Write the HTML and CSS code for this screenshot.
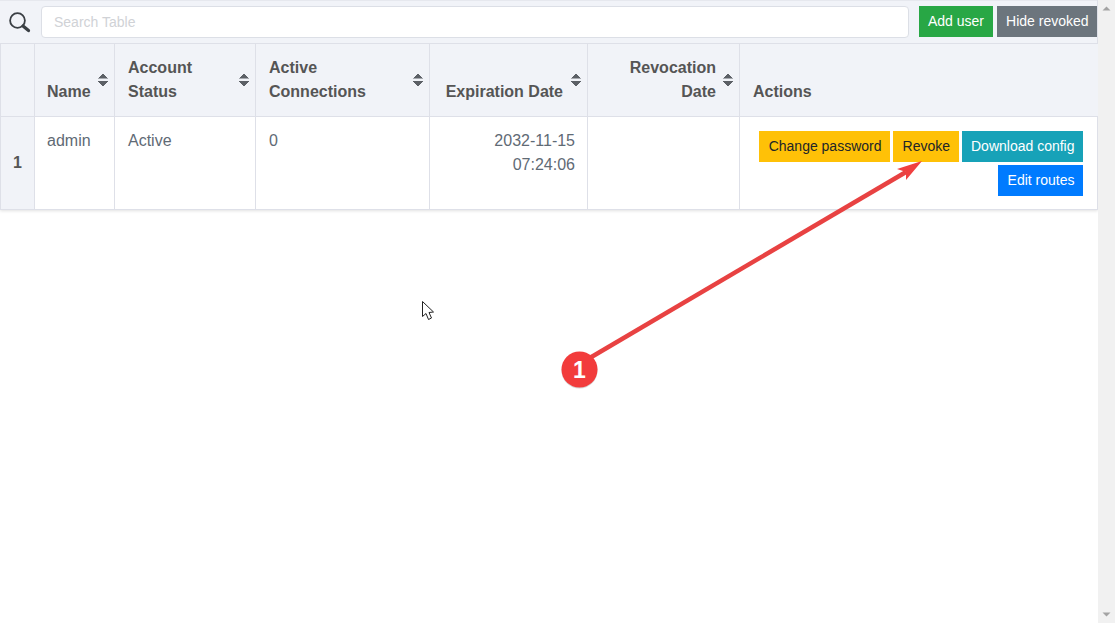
FILE: index.html
```html
<!DOCTYPE html>
<html lang="en">
<head>
<meta charset="utf-8">
<title>Users</title>
<link rel="stylesheet" href="styles.css">
</head>
<body>
<div class="page">
  <main class="main">
    <div class="panel">
      <div class="toolbar">
        <svg class="search-icon" width="24" height="24" viewBox="0 0 24 24" aria-hidden="true">
          <circle cx="9.5" cy="10.5" r="7.4" fill="none" stroke="#3a3f44" stroke-width="1.8"/>
          <path d="M15 16 L20.5 20.6" stroke="#3a3f44" stroke-width="3.2" stroke-linecap="round"/>
        </svg>
        <input class="search" type="text" placeholder="Search Table">
        <div class="toolbar-buttons">
          <button class="btn btn-green">Add user</button>
          <button class="btn btn-gray">Hide revoked</button>
        </div>
      </div>
      <table class="grid">
        <colgroup>
          <col class="c0"><col class="c1"><col class="c2"><col class="c3"><col class="c4"><col class="c5"><col class="c6">
        </colgroup>
        <thead>
          <tr>
            <th></th>
            <th class="sort"><span class="th-label">Name</span><i class="sorter"></i></th>
            <th class="sort indent"><span class="th-label">Account<br>Status</span><i class="sorter"></i></th>
            <th class="sort indent"><span class="th-label">Active<br>Connections</span><i class="sorter"></i></th>
            <th class="sort right"><span class="th-label">Expiration Date</span><i class="sorter"></i></th>
            <th class="sort right tight"><span class="th-label">Revocation<br>Date</span><i class="sorter"></i></th>
            <th class="plain indent">Actions</th>
          </tr>
        </thead>
        <tbody>
          <tr>
            <th class="rownum">1</th>
            <td>admin</td>
            <td class="indent">Active</td>
            <td class="indent">0</td>
            <td class="right">2032-11-15<br>07:24:06</td>
            <td></td>
            <td class="actions">
              <div class="action-wrap">
                <button class="btn btn-yellow">Change password</button>
                <button class="btn btn-yellow btn-revoke">Revoke</button>
                <button class="btn btn-teal">Download config</button>
                <button class="btn btn-blue">Edit routes</button>
              </div>
            </td>
          </tr>
        </tbody>
      </table>
    </div>
  </main>
  <div class="scrollbar">
    <svg width="17" height="17" viewBox="0 0 17 17" aria-hidden="true"><path d="M4.5 10.5 L8.5 6.5 L12.5 10.5Z" fill="#a3a3a3"/></svg>
    <svg width="17" height="17" viewBox="0 0 17 17" aria-hidden="true"><path d="M4.5 6.5 L8.5 10.5 L12.5 6.5Z" fill="#a3a3a3"/></svg>
  </div>
</div>

<svg class="annotation" width="1115" height="623" viewBox="0 0 1115 623" aria-hidden="true">
  <path d="M588 359 L906 172" stroke="#e84242" stroke-width="4.5" fill="none"/>
  <path d="M922 161 L897 169 L906 172 L906 180Z" fill="#f04040"/>
  <circle cx="579.5" cy="370.5" r="18" fill="#8a8a8a" opacity=".35"/>
  <circle cx="579.5" cy="369.5" r="18" fill="#f23c3c"/>
  <text x="579.5" y="378" text-anchor="middle" class="badge-num">1</text>
  <path d="M422.5 301.5 V316.5 L426 313.5 L428.5 319.5 L431.5 318 L429 312.5 L433.5 312 Z" fill="#fff" stroke="#222" stroke-width="1" stroke-linejoin="round"/>
</svg>
</body>
</html>
```

FILE: styles.css
```css
* { box-sizing: border-box; }
html, body { margin: 0; padding: 0; height: 100%; overflow: hidden; background: #fff; }
body { font-family: "Liberation Sans", Arial, sans-serif; font-size: 16px; color: #555; }

.page { display: flex; height: 623px; }
.main { flex: 1; min-width: 0; }
.scrollbar {
  width: 17px; flex: none; background: #f1f1f1;
  display: flex; flex-direction: column; justify-content: space-between;
}
.scrollbar svg { display: block; }

.panel {
  width: 1098px;
  border-right: 1px solid #dee0e8;
  border-bottom: 1px solid #dee0e8;
  box-shadow: 0 1px 3px rgba(0,0,0,.12);
}
.toolbar {
  height: 44px; display: flex; align-items: center;
  background: #f1f3f8; border-bottom: 1px solid #dee0e8;
  border-top: 1px solid #e6e8ee;
  padding-left: 8px;
}
.search-icon { flex: none; margin-right: 9px; }
.search {
  width: 868px; height: 32px; flex: none;
  border: 1px solid #dcdfe6; border-radius: 4px; background: #fff;
  padding: 0 12px; font: 14px "Liberation Sans", Arial, sans-serif; color: #555; outline: none;
}
.search::placeholder { color: #d0d2d6; opacity: 1; }
.toolbar-buttons { margin-left: 10px; display: flex; gap: 4px; align-self: flex-start; margin-top: 5px; }

.btn {
  display: inline-block; height: 31px; padding: 0 9px; border: 0; border-radius: 0;
  font: 14px/31px "Liberation Sans", Arial, sans-serif; white-space: nowrap; cursor: pointer;
}
.btn-green { background: #28a745; color: #fff; }
.btn-gray { background: #6c757d; color: #fff; padding-right: 8px; }
.btn-yellow { background: #ffc107; color: #212529; padding: 0 8px 0 10px; }
.btn-yellow.btn-revoke { padding: 0 9px 0 10px; }
.btn-teal { background: #17a2b8; color: #fff; padding: 0 8px 0 9px; }
.btn-blue { background: #007bff; color: #fff; padding: 0 8px 0 10px; }

.grid { width: 1097px; table-layout: fixed; border-collapse: collapse; }
.c0 { width: 34px; } .c1 { width: 80px; } .c2 { width: 141px; } .c3 { width: 174px; }
.c4 { width: 158px; } .c5 { width: 152px; } .c6 { width: 358px; }

.grid th, .grid td { border-left: 1px solid #dee0e8; border-top: 0; }
.grid thead th {
  height: 72px; background: #f1f3f8; font-weight: 700; text-align: left;
  vertical-align: bottom; padding: 12px; line-height: 24px; position: relative;
  border-bottom: 1px solid #dee0e8;
}
.grid thead th.sort { padding-right: 24px; }
.grid thead th.right { text-align: right; }
.grid thead th.tight { padding-right: 23px; }
.grid thead th.indent, .grid tbody td.indent { padding-left: 13px; }
.sorter {
  position: absolute; right: 6px; top: 29px; width: 10px; height: 13px;
  background:
    linear-gradient(to top left, #5c6066 50%, transparent 50%) 0 0 / 5px 5.5px no-repeat,
    linear-gradient(to top right, #5c6066 50%, transparent 50%) 5px 0 / 5px 5.5px no-repeat,
    linear-gradient(to bottom left, #5c6066 50%, transparent 50%) 0 7.5px / 5px 5.5px no-repeat,
    linear-gradient(to bottom right, #5c6066 50%, transparent 50%) 5px 7.5px / 5px 5.5px no-repeat;
}

.grid tbody td, .grid tbody th { height: 92px; vertical-align: top; padding: 12px; line-height: 24px; }
.grid tbody td { color: #5f6a75; }
.grid tbody .rownum {
  background: #f1f3f8; font-weight: 700; text-align: center; vertical-align: middle; padding: 0; color: #555;
}
.grid tbody td.right { text-align: right; }
.grid tbody td.actions { padding: 14px 15px 0 12px; }
.action-wrap { display: flex; flex-wrap: wrap; justify-content: flex-end; gap: 3px; }

.annotation { position: absolute; left: 0; top: 0; pointer-events: none; }
.badge-num { font: 700 23px "Liberation Sans", Arial, sans-serif; fill: #fff; }
```
